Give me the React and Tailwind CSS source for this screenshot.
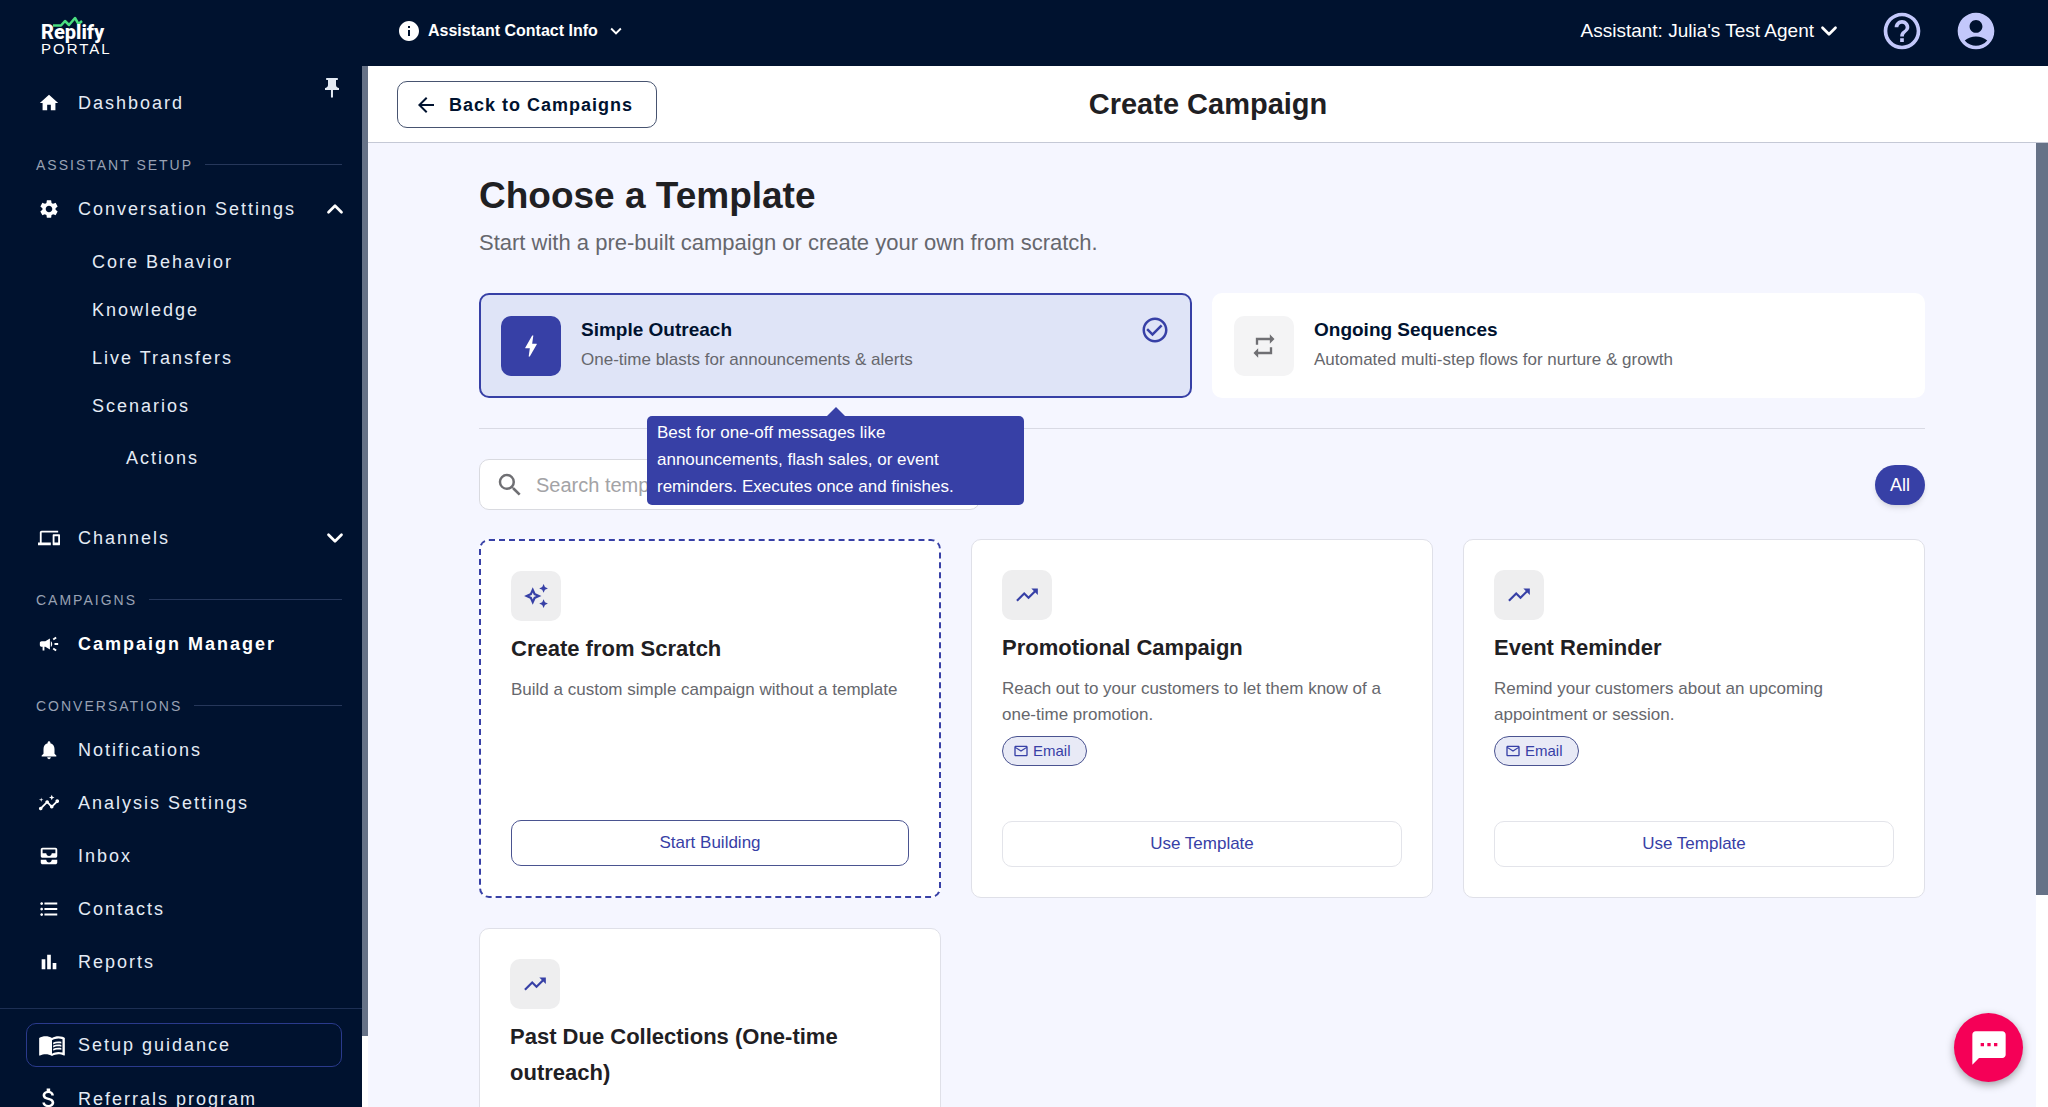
import React from "react";
import { ChevronDown, ChevronUp } from "lucide-react";
import {
  MdHome, MdSettings, MdDevices, MdCampaign, MdNotifications, MdInsights, MdAllInbox,
  MdFormatListBulleted, MdBarChart, MdMenuBook, MdAttachMoney, MdPushPin, MdInfo,
  MdExpandMore, MdHelpOutline, MdAccountCircle, MdTextsms, MdBolt, MdRepeat,
  MdCheckCircleOutline, MdSearch, MdOutlineAutoAwesome, MdTrendingUp, MdMailOutline, MdArrowBack,
} from "react-icons/md";

const reports = [
  { label: "Notifications", icon: MdNotifications },
  { label: "Analysis Settings", icon: MdInsights },
  { label: "Inbox", icon: MdAllInbox },
  { label: "Contacts", icon: MdFormatListBulleted },
  { label: "Reports", icon: MdBarChart },
];

const templates = [
  {
    title: "Promotional Campaign",
    text: "Reach out to your customers to let them know of a one-time promotion.",
  },
  {
    title: "Event Reminder",
    text: "Remind your customers about an upcoming appointment or session.",
  },
  {
    title: "Past Due Collections (One-time outreach)",
    text: "This template lets you follow up on past due balances.",
  },
];

function Logo() {
  return (
    <a href="#" className="block w-[72px] text-white">
      <svg viewBox="0 0 72 12" className="-mb-[7px] block h-3 w-[72px]" fill="none">
        <path d="M12 9.500h8l4-4.500 4 4L34 2l3.500 6 3.500-3" stroke="#4ade80" strokeWidth="2.500" strokeLinejoin="round" />
      </svg>
      <span className="block font-[Roboto,sans-serif] text-[20px] leading-[22px] font-extrabold">Replify</span>
      <span className="block text-[15px] leading-3 tracking-[2px]">PORTAL</span>
    </a>
  );
}

function SectionLabel({ children }) {
  return (
    <div className="mr-[6px] flex h-[53px] items-center gap-3 pt-[18px] pl-9">
      <h2 className="text-sm tracking-[2px] text-[#98a1b3]">{children}</h2>
      <span className="h-px flex-1 bg-[#26375a]" />
    </div>
  );
}

function NavLink({ icon: Icon, label, active, children }) {
  return (
    <div className="flex h-[53px] items-center pl-[38px]">
      <a href="#" className="flex flex-1 items-center gap-[18px]">
        <Icon className="size-[22px] text-white" />
        <span className={active ? "font-bold text-white" : ""}>{label}</span>
      </a>
      {children}
    </div>
  );
}

function Sidebar() {
  return (
    <aside className="flex w-[368px] shrink-0 bg-[#00122f]">
      <div className="flex min-w-0 flex-1 flex-col overflow-hidden text-lg leading-6 tracking-[2px] text-[#e4ebf5]">
        <nav className="pt-2.5 pr-[14px]">
          <NavLink icon={MdHome} label="Dashboard">
            <button aria-label="Unpin menu" className="mr-1 self-start">
              <MdPushPin className="size-6" />
            </button>
          </NavLink>
          <SectionLabel>ASSISTANT SETUP</SectionLabel>
          <NavLink icon={MdSettings} label="Conversation Settings">
            <button aria-label="Collapse conversation settings">
              <ChevronUp className="size-[26px] text-white" strokeWidth={2.5} />
            </button>
          </NavLink>
          <ul className="pt-[3px] pb-0.5 pl-[92px]">
            {["Core Behavior", "Knowledge", "Live Transfers", "Scenarios"].map((item) => (
              <li key={item} className="flex h-12 items-center">
                <a href="#">{item}</a>
              </li>
            ))}
          </ul>
          <div className="mb-[27px] flex h-[52px] items-center pl-[126px]">
            <a href="#">Actions</a>
          </div>
          <NavLink icon={MdDevices} label="Channels">
            <button aria-label="Expand channels">
              <ChevronDown className="size-[26px] text-white" strokeWidth={2.5} />
            </button>
          </NavLink>
          <SectionLabel>CAMPAIGNS</SectionLabel>
          <NavLink icon={MdCampaign} label="Campaign Manager" active />
          <SectionLabel>CONVERSATIONS</SectionLabel>
          {reports.map((r) => (
            <NavLink key={r.label} icon={r.icon} label={r.label} />
          ))}
        </nav>
        <div className="mt-5 border-t border-[#1d2f54] pt-[14px] pr-5 pl-[26px]">
          <a href="#" className="flex h-11 items-center gap-3 rounded-[10px] border border-[#2a3a8c] pl-[11px]">
            <MdMenuBook className="size-7 text-white" />
            <span>Setup guidance</span>
          </a>
          <a href="#" className="mt-[5px] flex h-[53px] items-center gap-[15px] pl-[9px]">
            <MdAttachMoney className="size-7 text-white" />
            <span>Referrals program</span>
          </a>
        </div>
      </div>
      <div className="w-[6px] shrink-0 bg-white">
        <div className="h-[93.2%] bg-[#667287]" />
      </div>
    </aside>
  );
}

function ModeCard({ icon: Icon, title, text, selected }) {
  return (
    <button
      aria-pressed={!!selected}
      className={
        selected
          ? "flex h-[105px] items-center gap-5 rounded-[10px] border-2 border-[#3740a6] bg-[#dfe4f7] px-5 text-left"
          : "flex h-[105px] items-center gap-5 rounded-[10px] border-2 border-white bg-white px-5 text-left"
      }
    >
      <span
        className={
          selected
            ? "grid size-[60px] shrink-0 place-items-center rounded-[10px] bg-[#3740a6] text-white"
            : "grid size-[60px] shrink-0 place-items-center rounded-[10px] bg-[#f4f4f5] text-[#6f6f73]"
        }
      >
        <Icon className="size-7" />
      </span>
      <span className="flex-1 pb-px">
        <span className="block text-[19px] leading-[30px] font-bold text-[#00122f]">{title}</span>
        <span className="block text-[17px] leading-[30px] text-[#66676d]">{text}</span>
      </span>
      {selected && <MdCheckCircleOutline className="mt-5 size-[30px] self-start text-[#3740a6]" />}
    </button>
  );
}

function CardBody({ icon: Icon, title, text }) {
  return (
    <>
      <span className="grid size-[50px] place-items-center rounded-[10px] bg-[#eeeeef] text-[#3740a6]">
        <Icon className="size-[26px]" />
      </span>
      <h3 className="mt-2.5 text-[22px] leading-9 font-bold text-[#1f2023]">{title}</h3>
      <p className="mt-2.5 text-[17px] leading-[26px] text-[#66676d]">{text}</p>
    </>
  );
}

export default function App() {
  return (
    <div className="flex h-screen flex-col overflow-hidden bg-[#f5f6ff] font-['Liberation_Sans',Arial,sans-serif]">
      <header className="flex h-[66px] shrink-0 items-center bg-[#00122f] pr-[50px] pb-1 pl-[41px] text-white">
        <div className="w-[356px] pt-2">
          <Logo />
        </div>
        <button className="flex items-center gap-[7px] text-base font-bold">
          <MdInfo className="size-6" />
          Assistant Contact Info
          <MdExpandMore className="size-[22px]" />
        </button>
        <div className="ml-auto flex items-center">
          <button className="flex items-center gap-0.5 text-[19px]">
            Assistant: Julia's Test Agent
            <ChevronDown className="size-[26px]" strokeWidth={2.5} />
          </button>
          <button aria-label="Help" className="ml-[38px] text-[#c3c8fb]">
            <MdHelpOutline className="size-11" />
          </button>
          <button aria-label="Account" className="ml-[30px] text-[#c3c8fb]">
            <MdAccountCircle className="size-11" />
          </button>
        </div>
      </header>

      <div className="flex min-h-0 flex-1">
        <Sidebar />
        <div className="flex min-w-0 flex-1 flex-col">
          <div className="grid h-[77px] shrink-0 grid-cols-[1fr_auto_1fr] items-center border-b border-[#c5c9d6] bg-white px-[29px] pt-px">
            <button className="flex h-[47px] w-[260px] items-center gap-[11px] rounded-[10px] border border-[#475470] pl-[16px] text-lg font-bold tracking-[1px] text-[#00122f]">
              <MdArrowBack className="size-6" />
              Back to Campaigns
            </button>
            <h1 className="text-[29px] font-bold text-[#1f2023]">Create Campaign</h1>
          </div>

          <div className="flex min-h-0 flex-1">
            <main className="min-w-0 flex-1 overflow-hidden px-[111px] pt-[30px]">
              <h2 className="text-[37px] leading-[46px] font-bold text-[#1f2023]">Choose a Template</h2>
              <p className="mt-2 text-[22px] leading-8 text-[#66676d]">
                Start with a pre-built campaign or create your own from scratch.
              </p>

              <div className="relative mt-[34px] grid grid-cols-2 gap-5">
                <ModeCard selected icon={MdBolt} title="Simple Outreach" text="One-time blasts for announcements & alerts" />
                <ModeCard icon={MdRepeat} title="Ongoing Sequences" text="Automated multi-step flows for nurture & growth" />
                <div className="pointer-events-none absolute top-full left-0 z-10 flex w-[calc(50%-10px)] flex-col items-center pt-[9px]">
                  <span className="h-0 w-0 border-x-[9px] border-b-[9px] border-x-transparent border-b-[#3740a6]" />
                  <div role="tooltip" className="w-[377px] rounded-[5px] bg-[#3740a6] px-2.5 pt-[3px] pb-[5px] text-[17px] leading-[27px] text-white">
                    Best for one-off messages like announcements, flash sales, or event reminders. Executes once and finishes.
                  </div>
                </div>
              </div>

              <div className="mt-[30px] flex items-center justify-between border-t border-[#d9dae4] pt-[30px]">
                <label className="flex h-[51px] w-[501px] items-center gap-[11px] rounded-[10px] border border-[#d9dae0] bg-white px-[15px]">
                  <MdSearch className="size-[30px] text-[#6f6f73]" />
                  <input
                    type="text"
                    aria-label="Search templates"
                    placeholder="Search templates..."
                    className="min-w-0 flex-1 bg-transparent text-xl outline-none placeholder:text-[#a3a3a6]"
                  />
                </label>
                <button className="h-10 rounded-full bg-[#3740a6] px-[15px] text-lg text-white shadow-md">All</button>
              </div>

              <div className="mt-[29px] grid grid-cols-3 gap-[30px]">
                <article className="flex min-h-[359px] flex-col rounded-[10px] border-2 border-dashed border-[#3740a6] bg-white p-[30px]">
                  <CardBody icon={MdOutlineAutoAwesome} title="Create from Scratch" text="Build a custom simple campaign without a template" />
                  <button className="mt-auto h-[46px] rounded-[10px] border border-[#4a5390] text-[17px] text-[#3740a6]">
                    Start Building
                  </button>
                </article>
                {templates.map((t) => (
                  <article key={t.title} className="flex min-h-[359px] flex-col rounded-[10px] border border-[#dfe0e8] bg-white p-[30px]">
                    <CardBody icon={MdTrendingUp} title={t.title} text={t.text} />
                    <span className="mt-2 flex h-[30px] items-center gap-1 self-start rounded-full border border-[#4a5390] bg-[#e8eaf6] pr-[15px] pl-2.5 text-[15px] text-[#3740a6]">
                      <MdMailOutline className="size-4" />
                      Email
                    </span>
                    <button className="mt-auto h-[46px] rounded-[10px] border border-[#e3e4ea] text-[17px] text-[#3740a6]">
                      Use Template
                    </button>
                  </article>
                ))}
              </div>
            </main>
            <div className="w-3 shrink-0 bg-white">
              <div className="h-[78%] bg-[#667287]" />
            </div>
          </div>
        </div>
      </div>

      <button
        aria-label="Open chat"
        className="fixed right-[25px] bottom-[25px] grid size-[69px] place-items-center rounded-full bg-[#f50057] text-white shadow-[0_3px_8px_rgba(0,0,0,0.35)]"
      >
        <MdTextsms className="size-10" />
      </button>
    </div>
  );
}
